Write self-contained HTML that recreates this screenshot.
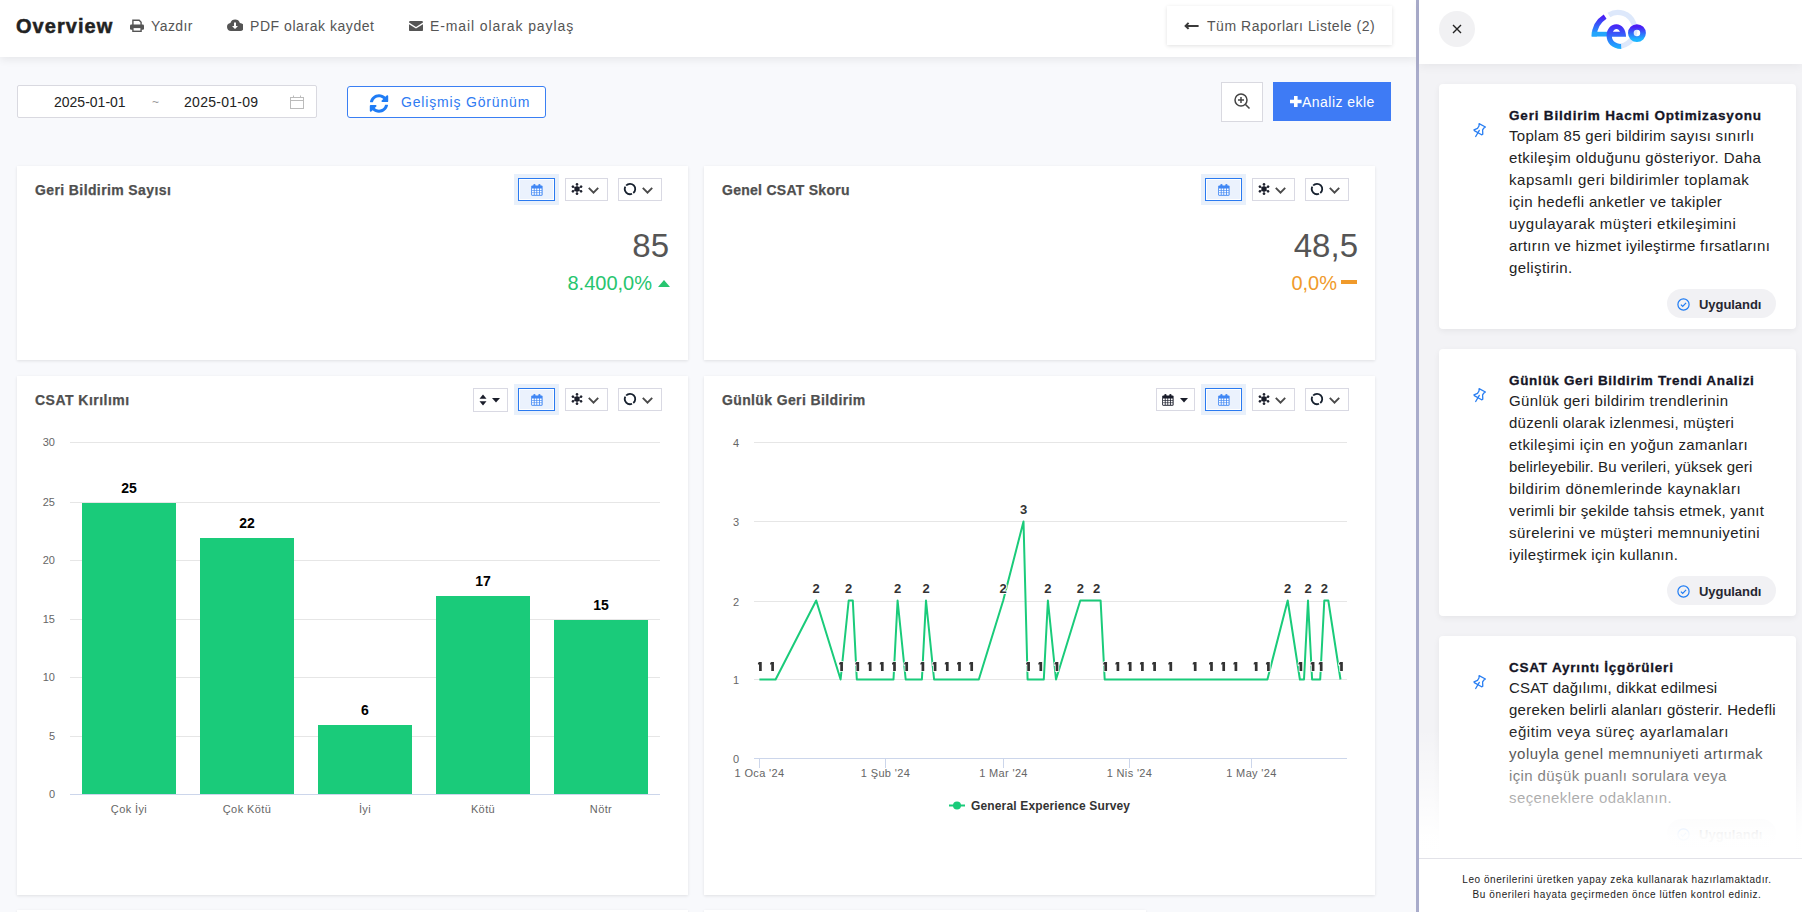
<!DOCTYPE html>
<html><head><meta charset="utf-8">
<style>
*{box-sizing:border-box;margin:0;padding:0}
html,body{width:1802px;height:912px;overflow:hidden}
body{background:#f8f9fc;font-family:"Liberation Sans",sans-serif;position:relative;color:#333}
.a{position:absolute}
.ov{position:absolute;left:0;top:0;pointer-events:none}
.hdr{left:0;top:0;width:1416px;height:57px;background:#fff;box-shadow:0 3px 8px rgba(0,0,0,0.07)}
.t{position:absolute;white-space:nowrap;line-height:1}
.card{position:absolute;background:#fff;box-shadow:0 1px 3px rgba(0,0,0,0.10)}
.ctitle{font-weight:bold;font-size:14px;color:#4f4f4f;-webkit-text-stroke:0.25px #4f4f4f}
.btn{position:absolute;top:0;height:23px;border:1px solid #d9d9e3;background:#fff}
.sel{position:absolute;background:#e9f0fc}
.sel>div{position:absolute;left:4px;top:4px;right:4px;bottom:4px;border:1.5px solid #2f7bf0;background:#eaf1fd}
.side{left:1419px;top:0;width:383px;height:912px;background:#f3f3f6}
.scard{position:absolute;left:20px;width:357px;background:#fff;border-radius:4px;box-shadow:0 2px 6px rgba(0,0,0,0.06)}
.stitle{position:absolute;left:70px;font-weight:bold;font-size:13.5px;color:#151525;-webkit-text-stroke:0.3px #151525}
.sbody{position:absolute;left:70px;font-size:15px;color:#222;line-height:1;white-space:nowrap}
.pill{position:absolute;width:109px;height:29px;border-radius:15px;background:#f1f1f4}
</style></head><body>
<!-- header -->
<div class="a hdr"></div>
<div id="ov" class="t" style="left:16px;top:16px;font-size:20px;font-weight:bold;color:#222;letter-spacing:1.05px;-webkit-text-stroke:0.5px #222">Overview</div>
<svg class="a" style="left:130px;top:19px" width="14" height="13" viewBox="0 0 14 13"><path d="M2.9 6V1.3H9.2L11.1 3.2V6" fill="none" stroke="#555" stroke-width="1.4"/><rect x="0" y="5.6" width="14" height="5.2" rx="1.2" fill="#555"/><rect x="2.9" y="8.4" width="8.2" height="3.9" fill="#fff" stroke="#555" stroke-width="1.4"/></svg>
<div id="yaz" class="t" style="left:151px;top:19px;font-size:14px;color:#555;letter-spacing:0.4px">Yazdır</div>
<svg class="a" style="left:227px;top:19px" width="16" height="12" viewBox="0 0 16 12"><path d="M4 12a4 4 0 0 1-0.6-7.95A5 5 0 0 1 12.9 4 4 4 0 0 1 12.5 12z" fill="#555"/><path d="M7 3.5h2v3.5h2L8 10 5 7h2z" fill="#fff"/></svg>
<div id="pdf" class="t" style="left:250px;top:19px;font-size:14px;color:#555;letter-spacing:0.55px">PDF olarak kaydet</div>
<svg class="a" style="left:408.5px;top:21.3px" width="14" height="10.2" viewBox="0 0 14 10.2"><path d="M0 1.2A1.2 1.2 0 0 1 1.2 0h11.6A1.2 1.2 0 0 1 14 1.2v.4L7 5.9 0 1.6z M0 3.2l7 4.3 7-4.3V9a1.2 1.2 0 0 1-1.2 1.2H1.2A1.2 1.2 0 0 1 0 9z" fill="#555"/></svg>
<div id="mail" class="t" style="left:430px;top:19px;font-size:14px;color:#555;letter-spacing:0.9px">E-mail olarak paylaş</div>

<div class="a" style="left:1167px;top:6px;width:225px;height:39px;background:#fff;box-shadow:0 1px 4px rgba(0,0,0,0.12)"></div>
<svg class="a" style="left:1184px;top:21px" width="16" height="10" viewBox="0 0 16 10"><path d="M4.6 1.9L1.6 4.9 4.6 7.9M1.8 4.9H14.6" stroke="#3a3a3a" stroke-width="2" fill="none"/></svg>
<div id="tum" class="t" style="left:1207px;top:19px;font-size:14px;color:#555;letter-spacing:0.54px">Tüm Raporları Listele (2)</div>

<!-- toolbar -->
<div class="a" style="left:17px;top:85px;width:300px;height:33px;background:#fff;border:1px solid #d9d9e0;border-radius:2px"></div>
<div id="d1" class="t" style="left:54px;top:95px;font-size:14px;color:#222">2025-01-01</div>
<div id="tilde" class="t" style="left:152px;top:96px;font-size:12px;color:#999">~</div>
<div id="d2" class="t" style="left:184px;top:95px;font-size:14px;color:#222;letter-spacing:0.28px">2025-01-09</div>
<svg class="a" style="left:290px;top:95px" width="14" height="14" viewBox="0 0 14 14"><rect x="0.5" y="2.5" width="13" height="11" fill="none" stroke="#bbb"/><line x1="0.5" y1="5.5" x2="13.5" y2="5.5" stroke="#bbb"/><line x1="3.5" y1="0.5" x2="3.5" y2="3" stroke="#bbb"/><line x1="10.5" y1="0.5" x2="10.5" y2="3" stroke="#bbb"/></svg>

<div class="a" style="left:347px;top:86px;width:199px;height:32px;background:#fff;border:1px solid #3a7ff3;border-radius:3px"></div>
<svg class="a" style="left:369px;top:94px" width="20" height="19" viewBox="0 0 512 512"><path fill="#1f7cf5" d="M370.72 133.28C339.458 104.008 298.888 87.962 255.848 88c-77.458.068-144.328 53.178-162.791 126.85-1.344 5.363-6.122 9.15-11.651 9.15H24.103c-7.498 0-13.194-6.807-11.807-14.176C33.933 94.924 134.813 8 256 8c66.448 0 126.791 26.136 171.315 68.685L463.03 40.97C478.149 25.851 504 36.559 504 57.941V192c0 13.255-10.745 24-24 24H345.941c-21.382 0-32.09-25.851-16.971-40.971l41.75-41.749zM32 296h134.059c21.382 0 32.09 25.851 16.971 40.971l-41.75 41.75c31.262 29.273 71.835 45.319 114.876 45.28 77.418-.07 144.315-53.144 162.787-126.849 1.344-5.363 6.122-9.15 11.651-9.15h57.304c7.498 0 13.194 6.807 11.807 14.176C478.067 417.076 377.187 504 256 504c-66.448 0-126.791-26.136-171.315-68.685L48.97 471.03C33.851 486.149 8 475.441 8 454.059V320c0-13.255 10.745-24 24-24z"/></svg>
<div id="gel" class="t" style="left:401px;top:95px;font-size:14px;color:#2f7bf2;letter-spacing:0.83px">Gelişmiş Görünüm</div>

<div class="a" style="left:1221px;top:82px;width:42px;height:40px;background:#fff;border:1px solid #d9d9e0"></div>
<svg class="a" style="left:1234px;top:93px" width="17" height="17" viewBox="0 0 17 17"><circle cx="7" cy="7" r="6" fill="none" stroke="#444" stroke-width="1.5"/><path d="M7 4v6M4 7h6" stroke="#444" stroke-width="1.5"/><path d="M11.5 11.5L15.5 15.5" stroke="#444" stroke-width="1.6"/></svg>
<div class="a" style="left:1273px;top:82px;width:118px;height:39px;background:#3e7bf5"></div>
<svg class="a" style="left:1290px;top:96px" width="12" height="11" viewBox="0 0 12 11"><path d="M4 0h3.6v3.7H11.6v3.6H7.6V11H4V7.3H0V3.7h4z" fill="#fff"/></svg><div id="anl" class="t" style="left:1302px;top:95px;font-size:14px;color:#fff;letter-spacing:0.47px">Analiz ekle</div>
<!-- cards -->
<div class="card" style="left:17px;top:166px;width:671px;height:194px"></div>
<div class="card" style="left:704px;top:166px;width:671px;height:194px"></div>
<div class="card" style="left:17px;top:376px;width:671px;height:519px"></div>
<div class="card" style="left:704px;top:376px;width:671px;height:519px"></div>
<div class="card" style="left:17px;top:910px;width:671px;height:100px"></div>
<div class="card" style="left:704px;top:910px;width:442px;height:100px"></div>

<div id="t1" class="t ctitle" style="left:35px;top:183px;letter-spacing:0.39px">Geri Bildirim Sayısı</div>
<div id="t2" class="t ctitle" style="left:722px;top:183px;letter-spacing:0.27px">Genel CSAT Skoru</div>
<div id="t3" class="t ctitle" style="left:35px;top:393px;letter-spacing:0.48px">CSAT Kırılımı</div>
<div id="t4" class="t ctitle" style="left:722px;top:393px;letter-spacing:0.37px">Günlük Geri Bildirim</div>

<div id="n85" class="t" style="right:1133px;top:229px;font-size:33px;color:#555">85</div>
<div id="p85" class="t" style="right:1150px;top:272.5px;font-size:20px;color:#27c56f">8.400,0%</div>
<svg class="a" style="left:658px;top:280px" width="12" height="7" viewBox="0 0 12 7"><path d="M6 0L12 7H0z" fill="#27c56f"/></svg>

<div id="n48" class="t" style="right:444px;top:229px;font-size:33px;color:#555">48,5</div>
<div id="p48" class="t" style="right:465px;top:272.5px;font-size:20px;color:#f09a2b">0,0%</div>
<div class="a" style="left:1341px;top:280px;width:16px;height:4px;background:#f09a2b"></div>
<div class="a" style="left:514px;top:174px;width:45px;height:31px;background:#e8f0fb"></div><div class="a" style="left:518px;top:178px;width:37px;height:23px;background:#ebf2fd;border:1px solid #2a7af0;box-shadow:inset 0 0 0 1px #fff"></div><svg class="a" style="left:531px;top:184px" width="12" height="12" viewBox="0 0 12 12"><rect x="0.2" y="1.4" width="11.4" height="10.4" rx="1.2" fill="#3f86f4"/><rect x="2.3" y="0" width="2.2" height="3.2" rx="1.1" fill="#3f86f4"/><rect x="7.3" y="0" width="2.2" height="3.2" rx="1.1" fill="#3f86f4"/><rect x="1.0" y="4.5" width="1.8" height="1.7" fill="#fff"/><rect x="1.0" y="6.8" width="1.8" height="1.7" fill="#fff"/><rect x="1.0" y="9.1" width="1.8" height="1.7" fill="#fff"/><rect x="3.6" y="4.5" width="1.8" height="1.7" fill="#fff"/><rect x="3.6" y="6.8" width="1.8" height="1.7" fill="#fff"/><rect x="3.6" y="9.1" width="1.8" height="1.7" fill="#fff"/><rect x="6.2" y="4.5" width="1.8" height="1.7" fill="#fff"/><rect x="6.2" y="6.8" width="1.8" height="1.7" fill="#fff"/><rect x="6.2" y="9.1" width="1.8" height="1.7" fill="#fff"/><rect x="8.8" y="4.5" width="1.8" height="1.7" fill="#fff"/><rect x="8.8" y="6.8" width="1.8" height="1.7" fill="#fff"/><rect x="8.8" y="9.1" width="1.8" height="1.7" fill="#fff"/></svg><div class="btn" style="left:565px;top:178px;width:43px"></div><svg class="a" style="left:571px;top:183.4px" width="12" height="12" viewBox="0 0 12 12"><g stroke="#1a1d2a" fill="#1a1d2a" stroke-width="0.7"><line x1="6" y1="6" x2="6.00" y2="1.30"/><circle cx="6.00" cy="1.30" r="1.0"/><line x1="6" y1="6" x2="6.00" y2="10.70"/><circle cx="6.00" cy="10.70" r="1.0"/><line x1="6" y1="6" x2="10.07" y2="3.65"/><circle cx="10.07" cy="3.65" r="1.0"/><line x1="6" y1="6" x2="1.93" y2="3.65"/><circle cx="1.93" cy="3.65" r="1.0"/><line x1="6" y1="6" x2="1.93" y2="8.35"/><circle cx="1.93" cy="8.35" r="1.0"/><line x1="6" y1="6" x2="10.07" y2="8.35"/><circle cx="10.07" cy="8.35" r="1.0"/></g><circle cx="6" cy="6" r="2.7" fill="#1a1d2a"/></svg><svg class="a" style="left:588px;top:187px" width="11" height="7" viewBox="0 0 11 7"><path d="M0.8 0.8L5.5 5.6 10.2 0.8" fill="none" stroke="#4a4a4a" stroke-width="1.9"/></svg><div class="btn" style="left:618px;top:178px;width:44px"></div><svg class="a" style="left:623px;top:182px" width="14" height="14" viewBox="0 0 14 14"><g fill="none" stroke="#16202e" stroke-width="1.8"><path d="M3.14 3.52A5.2 5.2 0 1 1 10.27 11.04"/><path d="M9.03 11.79A5.2 5.2 0 0 1 2.33 4.72"/></g></svg><svg class="a" style="left:642px;top:187px" width="11" height="7" viewBox="0 0 11 7"><path d="M0.8 0.8L5.5 5.6 10.2 0.8" fill="none" stroke="#4a4a4a" stroke-width="1.9"/></svg><div class="a" style="left:1201px;top:174px;width:45px;height:31px;background:#e8f0fb"></div><div class="a" style="left:1205px;top:178px;width:37px;height:23px;background:#ebf2fd;border:1px solid #2a7af0;box-shadow:inset 0 0 0 1px #fff"></div><svg class="a" style="left:1218px;top:184px" width="12" height="12" viewBox="0 0 12 12"><rect x="0.2" y="1.4" width="11.4" height="10.4" rx="1.2" fill="#3f86f4"/><rect x="2.3" y="0" width="2.2" height="3.2" rx="1.1" fill="#3f86f4"/><rect x="7.3" y="0" width="2.2" height="3.2" rx="1.1" fill="#3f86f4"/><rect x="1.0" y="4.5" width="1.8" height="1.7" fill="#fff"/><rect x="1.0" y="6.8" width="1.8" height="1.7" fill="#fff"/><rect x="1.0" y="9.1" width="1.8" height="1.7" fill="#fff"/><rect x="3.6" y="4.5" width="1.8" height="1.7" fill="#fff"/><rect x="3.6" y="6.8" width="1.8" height="1.7" fill="#fff"/><rect x="3.6" y="9.1" width="1.8" height="1.7" fill="#fff"/><rect x="6.2" y="4.5" width="1.8" height="1.7" fill="#fff"/><rect x="6.2" y="6.8" width="1.8" height="1.7" fill="#fff"/><rect x="6.2" y="9.1" width="1.8" height="1.7" fill="#fff"/><rect x="8.8" y="4.5" width="1.8" height="1.7" fill="#fff"/><rect x="8.8" y="6.8" width="1.8" height="1.7" fill="#fff"/><rect x="8.8" y="9.1" width="1.8" height="1.7" fill="#fff"/></svg><div class="btn" style="left:1252px;top:178px;width:43px"></div><svg class="a" style="left:1258px;top:183.4px" width="12" height="12" viewBox="0 0 12 12"><g stroke="#1a1d2a" fill="#1a1d2a" stroke-width="0.7"><line x1="6" y1="6" x2="6.00" y2="1.30"/><circle cx="6.00" cy="1.30" r="1.0"/><line x1="6" y1="6" x2="6.00" y2="10.70"/><circle cx="6.00" cy="10.70" r="1.0"/><line x1="6" y1="6" x2="10.07" y2="3.65"/><circle cx="10.07" cy="3.65" r="1.0"/><line x1="6" y1="6" x2="1.93" y2="3.65"/><circle cx="1.93" cy="3.65" r="1.0"/><line x1="6" y1="6" x2="1.93" y2="8.35"/><circle cx="1.93" cy="8.35" r="1.0"/><line x1="6" y1="6" x2="10.07" y2="8.35"/><circle cx="10.07" cy="8.35" r="1.0"/></g><circle cx="6" cy="6" r="2.7" fill="#1a1d2a"/></svg><svg class="a" style="left:1275px;top:187px" width="11" height="7" viewBox="0 0 11 7"><path d="M0.8 0.8L5.5 5.6 10.2 0.8" fill="none" stroke="#4a4a4a" stroke-width="1.9"/></svg><div class="btn" style="left:1305px;top:178px;width:44px"></div><svg class="a" style="left:1310px;top:182px" width="14" height="14" viewBox="0 0 14 14"><g fill="none" stroke="#16202e" stroke-width="1.8"><path d="M3.14 3.52A5.2 5.2 0 1 1 10.27 11.04"/><path d="M9.03 11.79A5.2 5.2 0 0 1 2.33 4.72"/></g></svg><svg class="a" style="left:1329px;top:187px" width="11" height="7" viewBox="0 0 11 7"><path d="M0.8 0.8L5.5 5.6 10.2 0.8" fill="none" stroke="#4a4a4a" stroke-width="1.9"/></svg><div class="a" style="left:514px;top:384px;width:45px;height:31px;background:#e8f0fb"></div><div class="a" style="left:518px;top:388px;width:37px;height:23px;background:#ebf2fd;border:1px solid #2a7af0;box-shadow:inset 0 0 0 1px #fff"></div><svg class="a" style="left:531px;top:394px" width="12" height="12" viewBox="0 0 12 12"><rect x="0.2" y="1.4" width="11.4" height="10.4" rx="1.2" fill="#3f86f4"/><rect x="2.3" y="0" width="2.2" height="3.2" rx="1.1" fill="#3f86f4"/><rect x="7.3" y="0" width="2.2" height="3.2" rx="1.1" fill="#3f86f4"/><rect x="1.0" y="4.5" width="1.8" height="1.7" fill="#fff"/><rect x="1.0" y="6.8" width="1.8" height="1.7" fill="#fff"/><rect x="1.0" y="9.1" width="1.8" height="1.7" fill="#fff"/><rect x="3.6" y="4.5" width="1.8" height="1.7" fill="#fff"/><rect x="3.6" y="6.8" width="1.8" height="1.7" fill="#fff"/><rect x="3.6" y="9.1" width="1.8" height="1.7" fill="#fff"/><rect x="6.2" y="4.5" width="1.8" height="1.7" fill="#fff"/><rect x="6.2" y="6.8" width="1.8" height="1.7" fill="#fff"/><rect x="6.2" y="9.1" width="1.8" height="1.7" fill="#fff"/><rect x="8.8" y="4.5" width="1.8" height="1.7" fill="#fff"/><rect x="8.8" y="6.8" width="1.8" height="1.7" fill="#fff"/><rect x="8.8" y="9.1" width="1.8" height="1.7" fill="#fff"/></svg><div class="btn" style="left:565px;top:388px;width:43px"></div><svg class="a" style="left:571px;top:393.4px" width="12" height="12" viewBox="0 0 12 12"><g stroke="#1a1d2a" fill="#1a1d2a" stroke-width="0.7"><line x1="6" y1="6" x2="6.00" y2="1.30"/><circle cx="6.00" cy="1.30" r="1.0"/><line x1="6" y1="6" x2="6.00" y2="10.70"/><circle cx="6.00" cy="10.70" r="1.0"/><line x1="6" y1="6" x2="10.07" y2="3.65"/><circle cx="10.07" cy="3.65" r="1.0"/><line x1="6" y1="6" x2="1.93" y2="3.65"/><circle cx="1.93" cy="3.65" r="1.0"/><line x1="6" y1="6" x2="1.93" y2="8.35"/><circle cx="1.93" cy="8.35" r="1.0"/><line x1="6" y1="6" x2="10.07" y2="8.35"/><circle cx="10.07" cy="8.35" r="1.0"/></g><circle cx="6" cy="6" r="2.7" fill="#1a1d2a"/></svg><svg class="a" style="left:588px;top:397px" width="11" height="7" viewBox="0 0 11 7"><path d="M0.8 0.8L5.5 5.6 10.2 0.8" fill="none" stroke="#4a4a4a" stroke-width="1.9"/></svg><div class="btn" style="left:618px;top:388px;width:44px"></div><svg class="a" style="left:623px;top:392px" width="14" height="14" viewBox="0 0 14 14"><g fill="none" stroke="#16202e" stroke-width="1.8"><path d="M3.14 3.52A5.2 5.2 0 1 1 10.27 11.04"/><path d="M9.03 11.79A5.2 5.2 0 0 1 2.33 4.72"/></g></svg><svg class="a" style="left:642px;top:397px" width="11" height="7" viewBox="0 0 11 7"><path d="M0.8 0.8L5.5 5.6 10.2 0.8" fill="none" stroke="#4a4a4a" stroke-width="1.9"/></svg><div class="btn" style="left:473px;top:388px;width:35px;height:24px"></div><svg class="a" style="left:479px;top:394px" width="8" height="12" viewBox="0 0 8 12"><path d="M4 0.5L7.5 4.8H0.5z M0.5 7.2h7L4 11.5z" fill="#1a1d2a"/></svg><svg class="a" style="left:492px;top:398px" width="8" height="5" viewBox="0 0 8 5"><path d="M0 0h8L4 4.5z" fill="#1a1d2a"/></svg><div class="a" style="left:1201px;top:384px;width:45px;height:31px;background:#e8f0fb"></div><div class="a" style="left:1205px;top:388px;width:37px;height:23px;background:#ebf2fd;border:1px solid #2a7af0;box-shadow:inset 0 0 0 1px #fff"></div><svg class="a" style="left:1218px;top:394px" width="12" height="12" viewBox="0 0 12 12"><rect x="0.2" y="1.4" width="11.4" height="10.4" rx="1.2" fill="#3f86f4"/><rect x="2.3" y="0" width="2.2" height="3.2" rx="1.1" fill="#3f86f4"/><rect x="7.3" y="0" width="2.2" height="3.2" rx="1.1" fill="#3f86f4"/><rect x="1.0" y="4.5" width="1.8" height="1.7" fill="#fff"/><rect x="1.0" y="6.8" width="1.8" height="1.7" fill="#fff"/><rect x="1.0" y="9.1" width="1.8" height="1.7" fill="#fff"/><rect x="3.6" y="4.5" width="1.8" height="1.7" fill="#fff"/><rect x="3.6" y="6.8" width="1.8" height="1.7" fill="#fff"/><rect x="3.6" y="9.1" width="1.8" height="1.7" fill="#fff"/><rect x="6.2" y="4.5" width="1.8" height="1.7" fill="#fff"/><rect x="6.2" y="6.8" width="1.8" height="1.7" fill="#fff"/><rect x="6.2" y="9.1" width="1.8" height="1.7" fill="#fff"/><rect x="8.8" y="4.5" width="1.8" height="1.7" fill="#fff"/><rect x="8.8" y="6.8" width="1.8" height="1.7" fill="#fff"/><rect x="8.8" y="9.1" width="1.8" height="1.7" fill="#fff"/></svg><div class="btn" style="left:1252px;top:388px;width:43px"></div><svg class="a" style="left:1258px;top:393.4px" width="12" height="12" viewBox="0 0 12 12"><g stroke="#1a1d2a" fill="#1a1d2a" stroke-width="0.7"><line x1="6" y1="6" x2="6.00" y2="1.30"/><circle cx="6.00" cy="1.30" r="1.0"/><line x1="6" y1="6" x2="6.00" y2="10.70"/><circle cx="6.00" cy="10.70" r="1.0"/><line x1="6" y1="6" x2="10.07" y2="3.65"/><circle cx="10.07" cy="3.65" r="1.0"/><line x1="6" y1="6" x2="1.93" y2="3.65"/><circle cx="1.93" cy="3.65" r="1.0"/><line x1="6" y1="6" x2="1.93" y2="8.35"/><circle cx="1.93" cy="8.35" r="1.0"/><line x1="6" y1="6" x2="10.07" y2="8.35"/><circle cx="10.07" cy="8.35" r="1.0"/></g><circle cx="6" cy="6" r="2.7" fill="#1a1d2a"/></svg><svg class="a" style="left:1275px;top:397px" width="11" height="7" viewBox="0 0 11 7"><path d="M0.8 0.8L5.5 5.6 10.2 0.8" fill="none" stroke="#4a4a4a" stroke-width="1.9"/></svg><div class="btn" style="left:1305px;top:388px;width:44px"></div><svg class="a" style="left:1310px;top:392px" width="14" height="14" viewBox="0 0 14 14"><g fill="none" stroke="#16202e" stroke-width="1.8"><path d="M3.14 3.52A5.2 5.2 0 1 1 10.27 11.04"/><path d="M9.03 11.79A5.2 5.2 0 0 1 2.33 4.72"/></g></svg><svg class="a" style="left:1329px;top:397px" width="11" height="7" viewBox="0 0 11 7"><path d="M0.8 0.8L5.5 5.6 10.2 0.8" fill="none" stroke="#4a4a4a" stroke-width="1.9"/></svg><div class="btn" style="left:1156px;top:388px;width:39px"></div><svg class="a" style="left:1162px;top:394px" width="12" height="12" viewBox="0 0 12 12"><rect x="0.2" y="1.4" width="11.4" height="10.4" rx="1.2" fill="#1a1d2a"/><rect x="2.3" y="0" width="2.2" height="3.2" rx="1.1" fill="#1a1d2a"/><rect x="7.3" y="0" width="2.2" height="3.2" rx="1.1" fill="#1a1d2a"/><rect x="1.0" y="4.5" width="1.8" height="1.7" fill="#fff"/><rect x="1.0" y="6.8" width="1.8" height="1.7" fill="#fff"/><rect x="1.0" y="9.1" width="1.8" height="1.7" fill="#fff"/><rect x="3.6" y="4.5" width="1.8" height="1.7" fill="#fff"/><rect x="3.6" y="6.8" width="1.8" height="1.7" fill="#fff"/><rect x="3.6" y="9.1" width="1.8" height="1.7" fill="#fff"/><rect x="6.2" y="4.5" width="1.8" height="1.7" fill="#fff"/><rect x="6.2" y="6.8" width="1.8" height="1.7" fill="#fff"/><rect x="6.2" y="9.1" width="1.8" height="1.7" fill="#fff"/><rect x="8.8" y="4.5" width="1.8" height="1.7" fill="#fff"/><rect x="8.8" y="6.8" width="1.8" height="1.7" fill="#fff"/><rect x="8.8" y="9.1" width="1.8" height="1.7" fill="#fff"/></svg><svg class="a" style="left:1180px;top:398px" width="8" height="5" viewBox="0 0 8 5"><path d="M0 0h8L4 4.5z" fill="#1a1d2a"/></svg><!-- divider + sidebar -->
<div class="a" style="left:1416px;top:0;width:3px;height:912px;background:#a9accb"></div>
<div class="a side">
  <div class="a" style="left:0;top:0;width:383px;height:64px;background:#fff;box-shadow:0 2px 10px rgba(0,0,0,0.06)"></div>
  <div class="a" style="left:20px;top:11px;width:36px;height:36px;border-radius:50%;background:#f1f1f3"></div>
  <svg class="a" style="left:33px;top:24px" width="10" height="10" viewBox="0 0 10 10"><path d="M1 1L9 9M9 1L1 9" stroke="#222" stroke-width="1.4"/></svg>
  <svg class="a" style="left:166px;top:6px" width="70" height="48" viewBox="0 0 1330 912">
    <defs><linearGradient id="lg" x1="0" y1="0" x2="0" y2="1"><stop offset="0" stop-color="#4a1ef5"/><stop offset="1" stop-color="#1cb4ff"/></linearGradient></defs>
    <path d="M454.4 171.9A322 322 0 1 1 680.9 762.1" fill="none" stroke="#dde8fb" stroke-width="100"/>
    <path d="M381.8 201.4A450 450 0 0 0 175 580" fill="none" stroke="url(#lg)" stroke-width="100"/>
    <rect x="128" y="490" width="300" height="90" fill="#24a6fc"/>
    <path fill-rule="evenodd" fill="url(#lg)" d="M780,585 C780,440 700,345 597,345 C480,345 410,450 410,560 C410,700 510,815 690,815 L685,722 C580,715 515,660 512,585 Z M530,490 C545,455 570,435 598,435 C626,435 652,455 665,490 Z"/>
    <circle cx="987" cy="515" r="116" fill="none" stroke="url(#lg)" stroke-width="108"/>
</svg>

<div class="scard" style="top:84px;height:245px"><svg class="a" style="left:27px;top:32px" width="28" height="28" viewBox="0 0 28 28"><g fill="none" stroke="#2a7ff2" stroke-width="1.3" stroke-linejoin="round" stroke-linecap="round"><path d="M13.1,7.7 L19.4,11.0 L17.9,12.0 L16.6,13.8 L16.8,18.2 L15.6,18.8 L8.3,14.6 L8.0,13.9 L11.5,12.3 L13.0,10.0 Z"/><path d="M13.3,14.4 L9.7,20.5"/></g></svg><div id="s0t" class="t stitle" style="top:25px;letter-spacing:0.819px">Geri Bildirim Hacmi Optimizasyonu</div><div id="s0l0" class="t sbody" style="top:44px;letter-spacing:0.292px">Toplam 85 geri bildirim sayısı sınırlı</div><div id="s0l1" class="t sbody" style="top:66px;letter-spacing:0.418px">etkileşim olduğunu gösteriyor. Daha</div><div id="s0l2" class="t sbody" style="top:88px;letter-spacing:0.524px">kapsamlı geri bildirimler toplamak</div><div id="s0l3" class="t sbody" style="top:110px;letter-spacing:0.372px">için hedefli anketler ve takipler</div><div id="s0l4" class="t sbody" style="top:132px;letter-spacing:0.484px">uygulayarak müşteri etkileşimini</div><div id="s0l5" class="t sbody" style="top:154px;letter-spacing:0.283px">artırın ve hizmet iyileştirme fırsatlarını</div><div id="s0l6" class="t sbody" style="top:176px;letter-spacing:0.41px">geliştirin.</div><div class="pill" style="left:228px;top:205px"><svg class="a" style="left:10px;top:9px" width="13" height="13" viewBox="0 0 13 13"><circle cx="6.5" cy="6.5" r="5.6" fill="none" stroke="#1f7cf3" stroke-width="1.2"/><path d="M3.9 6.6l1.8 1.8 3.4-3.5" fill="none" stroke="#1f7cf3" stroke-width="1.2"/></svg><div id="s0p" class="t" style="left:32px;top:9px;font-size:13px;font-weight:bold;color:#262631;letter-spacing:-0.05px">Uygulandı</div></div></div>
<div class="scard" style="top:349px;height:267px"><svg class="a" style="left:27px;top:32px" width="28" height="28" viewBox="0 0 28 28"><g fill="none" stroke="#2a7ff2" stroke-width="1.3" stroke-linejoin="round" stroke-linecap="round"><path d="M13.1,7.7 L19.4,11.0 L17.9,12.0 L16.6,13.8 L16.8,18.2 L15.6,18.8 L8.3,14.6 L8.0,13.9 L11.5,12.3 L13.0,10.0 Z"/><path d="M13.3,14.4 L9.7,20.5"/></g></svg><div id="s1t" class="t stitle" style="top:25px;letter-spacing:0.662px">Günlük Geri Bildirim Trendi Analizi</div><div id="s1l0" class="t sbody" style="top:44px;letter-spacing:0.384px">Günlük geri bildirim trendlerinin</div><div id="s1l1" class="t sbody" style="top:66px;letter-spacing:0.256px">düzenli olarak izlenmesi, müşteri</div><div id="s1l2" class="t sbody" style="top:88px;letter-spacing:0.439px">etkileşimi için en yoğun zamanları</div><div id="s1l3" class="t sbody" style="top:110px;letter-spacing:0.146px">belirleyebilir. Bu verileri, yüksek geri</div><div id="s1l4" class="t sbody" style="top:132px;letter-spacing:0.532px">bildirim dönemlerinde kaynakları</div><div id="s1l5" class="t sbody" style="top:154px;letter-spacing:0.282px">verimli bir şekilde tahsis etmek, yanıt</div><div id="s1l6" class="t sbody" style="top:176px;letter-spacing:0.456px">sürelerini ve müşteri memnuniyetini</div><div id="s1l7" class="t sbody" style="top:198px;letter-spacing:0.308px">iyileştirmek için kullanın.</div><div class="pill" style="left:228px;top:227px"><svg class="a" style="left:10px;top:9px" width="13" height="13" viewBox="0 0 13 13"><circle cx="6.5" cy="6.5" r="5.6" fill="none" stroke="#1f7cf3" stroke-width="1.2"/><path d="M3.9 6.6l1.8 1.8 3.4-3.5" fill="none" stroke="#1f7cf3" stroke-width="1.2"/></svg><div id="s1p" class="t" style="left:32px;top:9px;font-size:13px;font-weight:bold;color:#262631;letter-spacing:-0.05px">Uygulandı</div></div></div>
<div class="scard" style="top:636px;height:300px"><svg class="a" style="left:27px;top:32px" width="28" height="28" viewBox="0 0 28 28"><g fill="none" stroke="#2a7ff2" stroke-width="1.3" stroke-linejoin="round" stroke-linecap="round"><path d="M13.1,7.7 L19.4,11.0 L17.9,12.0 L16.6,13.8 L16.8,18.2 L15.6,18.8 L8.3,14.6 L8.0,13.9 L11.5,12.3 L13.0,10.0 Z"/><path d="M13.3,14.4 L9.7,20.5"/></g></svg><div id="s2t" class="t stitle" style="top:25px;letter-spacing:0.791px">CSAT Ayrıntı İçgörüleri</div><div id="s2l0" class="t sbody" style="top:44px;letter-spacing:0.183px">CSAT dağılımı, dikkat edilmesi</div><div id="s2l1" class="t sbody" style="top:66px;letter-spacing:0.28px">gereken belirli alanları gösterir. Hedefli</div><div id="s2l2" class="t sbody" style="top:88px;letter-spacing:0.555px">eğitim veya süreç ayarlamaları</div><div id="s2l3" class="t sbody" style="top:110px;letter-spacing:0.536px">yoluyla genel memnuniyeti artırmak</div><div id="s2l4" class="t sbody" style="top:132px;letter-spacing:0.383px">için düşük puanlı sorulara veya</div><div id="s2l5" class="t sbody" style="top:154px;letter-spacing:0.405px">seçeneklere odaklanın.</div><div class="pill" style="left:228px;top:183px"><svg class="a" style="left:10px;top:9px" width="13" height="13" viewBox="0 0 13 13"><circle cx="6.5" cy="6.5" r="5.6" fill="none" stroke="#1f7cf3" stroke-width="1.2"/><path d="M3.9 6.6l1.8 1.8 3.4-3.5" fill="none" stroke="#1f7cf3" stroke-width="1.2"/></svg><div id="s2p" class="t" style="left:32px;top:9px;font-size:13px;font-weight:bold;color:#262631;letter-spacing:0.075px">Uygulandı</div></div></div>
  <div class="a" style="left:0;top:728px;width:383px;height:131px;background:linear-gradient(rgba(255,255,255,0),rgba(255,255,255,0.97) 82%,rgba(255,255,255,1))"></div>
  <div class="a" style="left:0;top:858px;width:383px;height:54px;background:#fff;border-top:1px solid #e2e2e8"></div>
  <div id="ft1" class="t" style="left:0;width:396px;text-align:center;top:871.5px;font-size:10px;color:#222;line-height:15px;letter-spacing:0.562px">Leo önerilerini üretken yapay zeka kullanarak hazırlamaktadır.</div>
  <div id="ft2" class="t" style="left:0;width:396px;text-align:center;top:886.5px;font-size:10px;color:#222;line-height:15px;letter-spacing:0.591px">Bu önerileri hayata geçirmeden önce lütfen kontrol ediniz.</div>
</div>
<svg class="ov" width="1802" height="912" viewBox="0 0 1802 912">
<g stroke="#e6e6e6" stroke-width="1"><line x1="70" y1="442.5" x2="660" y2="442.5"/><line x1="70" y1="502.5" x2="660" y2="502.5"/><line x1="70" y1="560.5" x2="660" y2="560.5"/><line x1="70" y1="619.5" x2="660" y2="619.5"/><line x1="70" y1="677.5" x2="660" y2="677.5"/><line x1="70" y1="736.5" x2="660" y2="736.5"/><line x1="754" y1="442.5" x2="1347" y2="442.5"/><line x1="754" y1="521.5" x2="1347" y2="521.5"/><line x1="754" y1="601.5" x2="1347" y2="601.5"/><line x1="754" y1="679.5" x2="1347" y2="679.5"/></g>
<rect x="82" y="503" width="94" height="291" fill="#1acb7a"/><rect x="200" y="538" width="94" height="256" fill="#1acb7a"/><rect x="318" y="725" width="94" height="69" fill="#1acb7a"/><rect x="436" y="596" width="94" height="198" fill="#1acb7a"/><rect x="554" y="620" width="94" height="174" fill="#1acb7a"/>
<line x1="70" y1="794.5" x2="660" y2="794.5" stroke="#ccd6eb" stroke-width="1"/>
<line x1="754" y1="758.5" x2="1347" y2="758.5" stroke="#ccd6eb" stroke-width="1"/>
<g stroke="#ccd6eb" stroke-width="1"><line x1="759.5" y1="758" x2="759.5" y2="768"/><line x1="885.5" y1="758" x2="885.5" y2="768"/><line x1="1003.5" y1="758" x2="1003.5" y2="768"/><line x1="1129.5" y1="758" x2="1129.5" y2="768"/><line x1="1251.5" y1="758" x2="1251.5" y2="768"/></g>
<g font-family="Liberation Sans" font-size="11" fill="#666" text-anchor="end"><text x="55" y="445.7">30</text><text x="55" y="505.7">25</text><text x="55" y="563.7">20</text><text x="55" y="622.7">15</text><text x="55" y="680.7">10</text><text x="55" y="739.7">5</text><text x="55" y="797.7">0</text><text x="739" y="446.5">4</text><text x="739" y="525.5">3</text><text x="739" y="605.5">2</text><text x="739" y="683.5">1</text><text x="739" y="762.5">0</text></g>
<g font-family="Liberation Sans" font-size="11" fill="#666" text-anchor="middle" letter-spacing="0.4"><text x="129" y="813">Çok İyi</text><text x="247" y="813">Çok Kötü</text><text x="365" y="813">İyi</text><text x="483" y="813">Kötü</text><text x="601" y="813">Nötr</text></g>
<g font-family="Liberation Sans" font-size="11" fill="#666" text-anchor="middle" letter-spacing="0.35"><text x="759.5" y="777">1 Oca '24</text><text x="885.5" y="777">1 Şub '24</text><text x="1003.5" y="777">1 Mar '24</text><text x="1129.5" y="777">1 Nis '24</text><text x="1251.5" y="777">1 May '24</text></g>
<g font-family="Liberation Sans" font-size="14" font-weight="bold" fill="#000" text-anchor="middle"><text x="129" y="492.5">25</text><text x="247" y="527.5">22</text><text x="365" y="714.5">6</text><text x="483" y="585.5">17</text><text x="601" y="609.5">15</text></g>
<polyline points="759.4,679.5 763.5,679.5 767.5,679.5 771.6,679.5 775.6,679.5 816.2,600.5 840.6,679.5 848.7,600.5 852.8,600.5 856.8,679.5 869.2,679.5 881.3,679.5 893.5,679.5 897.6,600.5 905.7,679.5 921.9,679.5 926.0,600.5 934.1,679.5 946.3,679.5 958.5,679.5 970.7,679.5 978.8,679.5 1003.2,600.5 1023.5,521.5 1027.6,679.5 1039.8,679.5 1043.8,679.5 1047.9,600.5 1056.0,679.5 1080.3,600.5 1096.6,600.5 1100.6,600.5 1104.7,679.5 1116.9,679.5 1129.2,679.5 1141.4,679.5 1153.6,679.5 1169.8,679.5 1194.2,679.5 1210.5,679.5 1222.7,679.5 1234.9,679.5 1255.2,679.5 1267.4,679.5 1287.7,600.5 1299.9,679.5 1304.0,679.5 1308.0,600.5 1312.1,679.5 1320.2,679.5 1324.3,600.5 1328.3,600.5 1340.5,679.5" fill="none" stroke="#1acb7a" stroke-width="2" stroke-linejoin="round"/>
<g font-family="Liberation Sans" font-size="13" font-weight="bold" fill="#333" text-anchor="middle" stroke="#fff" stroke-width="2" paint-order="stroke"><text x="816.2" y="592.7">2</text><text x="848.7" y="592.7">2</text><text x="897.6" y="592.7">2</text><text x="926.0" y="592.7">2</text><text x="1003.2" y="592.7">2</text><text x="1023.5" y="513.7">3</text><text x="1047.9" y="592.7">2</text><text x="1080.3" y="592.7">2</text><text x="1096.6" y="592.7">2</text><text x="1287.7" y="592.7">2</text><text x="1308.0" y="592.7">2</text><text x="1324.3" y="592.7">2</text></g>
<g fill="#333" stroke="#fff" stroke-width="1.5" paint-order="stroke"><path d="M759.05 662.0h2.7v8.9h-2.7v-6.6l-1.1 0.4v-1.6z"/><path d="M771.25 662.0h2.7v8.9h-2.7v-6.6l-1.1 0.4v-1.6z"/><path d="M840.25 662.0h2.7v8.9h-2.7v-6.6l-1.1 0.4v-1.6z"/><path d="M856.45 662.0h2.7v8.9h-2.7v-6.6l-1.1 0.4v-1.6z"/><path d="M868.85 662.0h2.7v8.9h-2.7v-6.6l-1.1 0.4v-1.6z"/><path d="M880.95 662.0h2.7v8.9h-2.7v-6.6l-1.1 0.4v-1.6z"/><path d="M893.15 662.0h2.7v8.9h-2.7v-6.6l-1.1 0.4v-1.6z"/><path d="M905.35 662.0h2.7v8.9h-2.7v-6.6l-1.1 0.4v-1.6z"/><path d="M921.55 662.0h2.7v8.9h-2.7v-6.6l-1.1 0.4v-1.6z"/><path d="M933.75 662.0h2.7v8.9h-2.7v-6.6l-1.1 0.4v-1.6z"/><path d="M945.95 662.0h2.7v8.9h-2.7v-6.6l-1.1 0.4v-1.6z"/><path d="M958.15 662.0h2.7v8.9h-2.7v-6.6l-1.1 0.4v-1.6z"/><path d="M970.35 662.0h2.7v8.9h-2.7v-6.6l-1.1 0.4v-1.6z"/><path d="M1027.25 662.0h2.7v8.9h-2.7v-6.6l-1.1 0.4v-1.6z"/><path d="M1039.45 662.0h2.7v8.9h-2.7v-6.6l-1.1 0.4v-1.6z"/><path d="M1055.65 662.0h2.7v8.9h-2.7v-6.6l-1.1 0.4v-1.6z"/><path d="M1104.35 662.0h2.7v8.9h-2.7v-6.6l-1.1 0.4v-1.6z"/><path d="M1116.55 662.0h2.7v8.9h-2.7v-6.6l-1.1 0.4v-1.6z"/><path d="M1128.85 662.0h2.7v8.9h-2.7v-6.6l-1.1 0.4v-1.6z"/><path d="M1141.05 662.0h2.7v8.9h-2.7v-6.6l-1.1 0.4v-1.6z"/><path d="M1153.25 662.0h2.7v8.9h-2.7v-6.6l-1.1 0.4v-1.6z"/><path d="M1169.45 662.0h2.7v8.9h-2.7v-6.6l-1.1 0.4v-1.6z"/><path d="M1193.85 662.0h2.7v8.9h-2.7v-6.6l-1.1 0.4v-1.6z"/><path d="M1210.15 662.0h2.7v8.9h-2.7v-6.6l-1.1 0.4v-1.6z"/><path d="M1222.35 662.0h2.7v8.9h-2.7v-6.6l-1.1 0.4v-1.6z"/><path d="M1234.55 662.0h2.7v8.9h-2.7v-6.6l-1.1 0.4v-1.6z"/><path d="M1254.85 662.0h2.7v8.9h-2.7v-6.6l-1.1 0.4v-1.6z"/><path d="M1267.05 662.0h2.7v8.9h-2.7v-6.6l-1.1 0.4v-1.6z"/><path d="M1299.55 662.0h2.7v8.9h-2.7v-6.6l-1.1 0.4v-1.6z"/><path d="M1311.75 662.0h2.7v8.9h-2.7v-6.6l-1.1 0.4v-1.6z"/><path d="M1319.85 662.0h2.7v8.9h-2.7v-6.6l-1.1 0.4v-1.6z"/><path d="M1340.15 662.0h2.7v8.9h-2.7v-6.6l-1.1 0.4v-1.6z"/></g>
<line x1="949" y1="805.5" x2="965" y2="805.5" stroke="#1acb7a" stroke-width="2"/>
<circle cx="957" cy="805.5" r="4" fill="#1acb7a"/>
<text x="971" y="810" font-family="Liberation Sans" font-size="12" font-weight="bold" fill="#333" letter-spacing="0.15">General Experience Survey</text>
</svg></body></html>
